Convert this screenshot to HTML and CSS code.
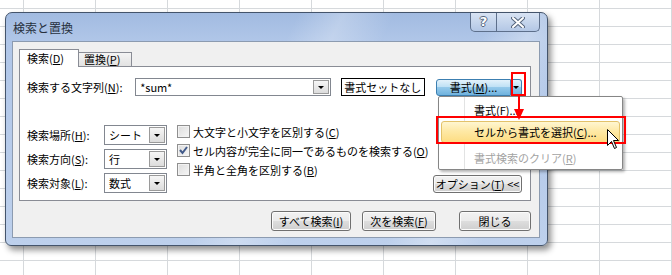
FILE: index.html
```html
<!DOCTYPE html>
<html lang="ja">

<head>
    <meta charset="UTF-8">
    <title>検索と置換</title>
    <link rel="stylesheet" href="styles.css">
</head>

<body>

    <div class="dialog">
        <div class="titlebar">
            <span class="title">検索と置換</span>
            <div class="caption-buttons">
                <span class="cap-btn help">?</span>
                <span class="cap-btn close">
                    <svg width="14" height="11" viewBox="0 0 14 11">
                        <path d="M2 1 L12 10 M12 1 L2 10" stroke="#55657d" stroke-width="4" stroke-linecap="round" />
                        <path d="M2 1 L12 10 M12 1 L2 10" stroke="#ffffff" stroke-width="2" stroke-linecap="round" />
                    </svg>
                </span>
            </div>
        </div>

        <div class="client">
            <div class="tabs">
                <span class="tab active">検索(<u>D</u>)</span>
                <span class="tab">置換(<u>P</u>)</span>
            </div>

            <div class="tab-page">
                <div class="find-row">
                    <span class="find-label">検索する文字列(<u>N</u>):</span>
                    <div class="combo wide"><span class="combo-text">*sum*</span><span class="drop"></span></div>
                    <div class="preview">書式セットなし</div>
                    <div class="split">
                        <span class="split-main">書式(<u>M</u>)...</span>
                        <span class="split-drop"></span>
                    </div>
                </div>

                <div class="options">
                    <div class="selects">
                        <div class="select-row">
                            <span class="select-label">検索場所(<u>H</u>):</span>
                            <div class="combo"><span class="combo-text">シート</span><span class="drop"></span></div>
                        </div>
                        <div class="select-row">
                            <span class="select-label">検索方向(<u>S</u>):</span>
                            <div class="combo"><span class="combo-text">行</span><span class="drop"></span></div>
                        </div>
                        <div class="select-row">
                            <span class="select-label">検索対象(<u>L</u>):</span>
                            <div class="combo"><span class="combo-text">数式</span><span class="drop"></span></div>
                        </div>
                    </div>

                    <div class="checks">
                        <div class="check"><span class="box"></span><span>大文字と小文字を区別する(<u>C</u>)</span></div>
                        <div class="check"><span class="box checked"></span><span>セル内容が完全に同一であるものを検索する(<u>O</u>)</span></div>
                        <div class="check"><span class="box"></span><span>半角と全角を区別する(<u>B</u>)</span></div>
                    </div>

                    <button class="btn options-btn">オプション(<u>T</u>) &lt;&lt;</button>
                </div>
            </div>

            <div class="actions">
                <button class="btn find-all">すべて検索(<u>I</u>)</button>
                <button class="btn find-next">次を検索(<u>F</u>)</button>
                <button class="btn close-btn">閉じる</button>
            </div>
        </div>
    </div>

    <!-- format dropdown menu -->
    <div class="menu">
        <div class="menu-item">書式(<u>F</u>)...</div>
        <div class="menu-item hover">セルから書式を選択(<u>C</u>)...</div>
        <div class="menu-item disabled">書式検索のクリア(<u>R</u>)</div>
    </div>

    <!-- annotations -->
    <div class="mark mark-drop"></div>
    <div class="mark mark-item"></div>
    <svg class="arrow" width="12" height="26" viewBox="0 0 12 26">
        <path d="M6 0 V16" stroke="#ff0000" stroke-width="2" />
        <path d="M1 14 L11 14 L6 25 Z" fill="#ff0000" />
    </svg>
    <svg class="cursor" width="13" height="21" viewBox="0 0 13 21">
        <path d="M0.5 0.5 L0.5 16.5 L4.5 12.5 L7.5 19.5 L9.5 18.5 L6.5 11.5 L11.5 11.5 Z" fill="#fff" stroke="#000" stroke-width="1" stroke-linejoin="round" />
    </svg>

</body>

</html>
```

FILE: styles.css
```css
body {
    margin: 0;
    width: 672px;
    height: 275px;
    overflow: hidden;
    position: relative;
    font-family: "Noto Sans CJK JP", "Noto Sans", sans-serif;
    font-size: 11px;
    line-height: 14px;
    color: #000;
    background-color: #ffffff;
    background-image:
        linear-gradient(to right, #d6d9dc 1px, transparent 1px),
        linear-gradient(to bottom, #d6d9dc 1px, transparent 1px);
    background-size: 72px 18px;
    background-position: 23px 8px;
}

u {
    text-decoration: underline;
    text-underline-offset: 1px;
}

/* dialog frame */
.dialog {
    margin: 12px 0 0 5px;
    width: 543px;
    height: 234px;
    box-sizing: border-box;
    border: 1px solid #44546b;
    border-radius: 7px 7px 6px 6px;
    padding: 0 7px 7px 6px;
    display: flex;
    flex-direction: column;
    background:
        linear-gradient(115deg, transparent 45%, rgba(255, 255, 255, 0.25) 52%, transparent 60%, transparent 75%, rgba(255, 255, 255, 0.3) 82%, transparent 90%),
        linear-gradient(to bottom, #a2bbe1 0%, #b0c6e8 12%, #bdd0ec 100%);
    box-shadow: 3px 4px 6px rgba(0, 0, 0, 0.45);
}

.titlebar {
    height: 28px;
    display: flex;
    align-items: flex-start;
}

.title {
    margin: 8px 0 0 1px;
    font-size: 12px;
    line-height: 14px;
    color: #27303d;
}

.caption-buttons {
    margin-left: auto;
    display: flex;
}

.cap-btn {
    height: 19px;
    box-sizing: border-box;
    border: 1px solid #5d6f8b;
    border-top: none;
    background: linear-gradient(to bottom, #d8e3f3, #b3c7e5);
    display: flex;
    align-items: center;
    justify-content: center;
}

.help {
    width: 27px;
    border-radius: 0 0 0 5px;
    font-family: "DejaVu Sans", sans-serif;
    font-weight: bold;
    font-size: 13px;
    color: #fff;
    text-shadow: 1px 0 #55657d, -1px 0 #55657d, 0 1px #55657d, 0 -1px #55657d;
}

.close {
    width: 43px;
    border-left: none;
    border-radius: 0 0 5px 0;
}

/* client area */
.client {
    flex: 1;
    background: #f0f0f0;
    border: 1px solid #8c9bb0;
    padding: 7px 8px 6px 6px;
    display: flex;
    flex-direction: column;
}

.tabs {
    display: flex;
    align-items: flex-end;
    height: 18px;
    margin-bottom: -1px;
    position: relative;
    z-index: 1;
}

.tab {
    height: 14px;
    width: 53px;
    margin-bottom: 1px;
    box-sizing: border-box;
    border: 1px solid #898c95;
    border-bottom: none;
    border-left: none;
    background: linear-gradient(to bottom, #f4f4f4, #e2e2e2);
    line-height: 13px;
    padding-left: 5px;
}

.tab.active {
    height: 18px;
    width: 60px;
    margin-bottom: 0;
    border-left: 1px solid #898c95;
    background: #fff;
    line-height: 17px;
    padding-left: 7px;
}

.tab-page {
    background: #fff;
    border: 1px solid #898c95;
    height: 135px;
    box-sizing: border-box;
    padding: 11px 8px 0 7px;
}

.find-row {
    display: flex;
    align-items: center;
    height: 18px;
}

.find-label {
    width: 109px;
}

.combo {
    width: 63px;
    height: 20px;
    box-sizing: border-box;
    border: 1px solid #828790;
    background: #fff;
    display: flex;
    align-items: center;
    justify-content: space-between;
    padding: 1px;
}

.combo.wide {
    width: 197px;
    height: 18px;
}

.combo-text {
    padding-left: 3px;
}

.drop {
    width: 16px;
    height: 100%;
    box-sizing: border-box;
    border: 1px solid #9a9a9a;
    background: linear-gradient(to bottom, #f6f6f6, #dcdcdc);
    display: flex;
    align-items: center;
    justify-content: center;
}

.drop::after,
.split-drop::after {
    content: "";
    border-left: 3px solid transparent;
    border-right: 3px solid transparent;
    border-top: 3px solid #000;
}

.preview {
    margin-left: 10px;
    width: 85px;
    height: 18px;
    box-sizing: border-box;
    border: 1px solid #000;
    text-align: center;
    line-height: 16px;
}

.split {
    margin-left: 11px;
    display: flex;
    height: 17px;
}

.split-main,
.split-drop {
    box-sizing: border-box;
    border: 1px solid #3c7fb1;
    background: linear-gradient(to bottom, #e3f2fb 0%, #bfe1f5 45%, #94c9ea 50%, #6fb2de 100%);
}

.split-main {
    width: 75px;
    border-radius: 3px 0 0 3px;
    text-align: center;
    line-height: 15px;
}

.split-drop {
    width: 11px;
    border-left: none;
    border-radius: 0 3px 3px 0;
    display: flex;
    align-items: center;
    justify-content: center;
}

.options {
    display: flex;
    margin-top: 26px;
    height: 71px;
}

.selects {
    margin-top: 3px;
    display: flex;
    flex-direction: column;
    gap: 4px;
}

.select-row {
    display: flex;
    align-items: center;
    height: 20px;
}

.select-label {
    width: 77px;
}

.checks {
    margin-left: 10px;
    display: flex;
    flex-direction: column;
    flex-shrink: 0;
    white-space: nowrap;
}

.check {
    height: 19px;
    display: flex;
    align-items: center;
    gap: 3px;
}

.box {
    width: 13px;
    height: 13px;
    box-sizing: border-box;
    border: 1px solid #8f8f8f;
    background: linear-gradient(135deg, #dcdcdc, #f6f6f6);
    box-shadow: inset 0 0 0 1px #f2f2f2;
}

.box.checked {
    background:
        url("data:image/svg+xml;utf8,<svg xmlns='http://www.w3.org/2000/svg' width='11' height='11'><path d='M2 5 L4.5 8 L9 2' stroke='%23415a8a' stroke-width='2' fill='none'/></svg>") center no-repeat,
        linear-gradient(135deg, #dcdcdc, #f6f6f6);
}

/* push buttons */
.btn {
    font: inherit;
    color: #000;
    padding: 0;
    box-sizing: border-box;
    border: 1px solid #707070;
    border-radius: 3px;
    background: linear-gradient(to bottom, #f2f2f2 0%, #ebebeb 48%, #dddddd 52%, #cfcfcf 100%);
    box-shadow: inset 0 0 0 1px #fbfbfb;
}

.options-btn {
    margin-left: auto;
    align-self: flex-end;
    width: 89px;
    height: 18px;
}

.actions {
    display: flex;
    justify-content: flex-end;
    margin-top: 10px;
}

.actions .btn {
    height: 20px;
}

.find-all {
    width: 80px;
    margin-right: 11px;
}

.find-next {
    width: 74px;
    margin-right: 23px;
}

.close-btn {
    width: 72px;
}

/* dropdown menu */
.menu {
    position: absolute;
    left: 438px;
    top: 96px;
    width: 185px;
    height: 74px;
    box-sizing: border-box;
    border: 1px solid #868686;
    border-radius: 2px;
    padding: 2px;
    background: linear-gradient(to right, #fff 25px, #e2e3e3 25px, #e2e3e3 26px, #fff 26px);
    box-shadow: 2px 2px 3px rgba(0, 0, 0, 0.3);
    display: flex;
    flex-direction: column;
}

.menu-item {
    height: 22px;
    line-height: 22px;
    padding-left: 33px;
    box-sizing: border-box;
}

.menu-item.hover {
    border: 1px solid #e3c26a;
    border-radius: 3px;
    line-height: 20px;
    padding-left: 32px;
    background: linear-gradient(to bottom, #fff6d1 0%, #fee9a6 45%, #fddc82 100%);
}

.menu-item.disabled {
    margin-top: 4px;
    color: #a3a3a3;
}

/* annotations */
.mark {
    position: absolute;
    border: 2px solid #ff0000;
    box-sizing: border-box;
}

.mark-drop {
    left: 511px;
    top: 72px;
    width: 15px;
    height: 24px;
}

.mark-item {
    left: 436px;
    top: 116px;
    width: 190px;
    height: 28px;
}

.arrow {
    position: absolute;
    left: 513px;
    top: 95px;
}

.cursor {
    position: absolute;
    left: 607px;
    top: 129px;
}
```
